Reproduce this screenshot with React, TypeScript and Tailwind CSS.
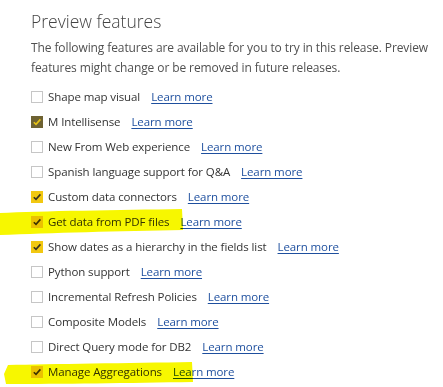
import React from 'react';

type Feature = { label: string; state: 'off' | 'on' | 'focus' };

const features: Feature[] = [
  { label: 'Shape map visual', state: 'off' },
  { label: 'M Intellisense', state: 'focus' },
  { label: 'New From Web experience', state: 'off' },
  { label: 'Spanish language support for Q&A', state: 'off' },
  { label: 'Custom data connectors', state: 'on' },
  { label: 'Get data from PDF files', state: 'on' },
  { label: 'Show dates as a hierarchy in the fields list', state: 'on' },
  { label: 'Python support', state: 'off' },
  { label: 'Incremental Refresh Policies', state: 'off' },
  { label: 'Composite Models', state: 'off' },
  { label: 'Direct Query mode for DB2', state: 'off' },
  { label: 'Manage Aggregations', state: 'on' },
];

function Check({ state }: { state: Feature['state'] }) {
  if (state === 'off') {
    return <span className="block w-[12px] h-[12px] border border-[#c6c6c6] bg-white shrink-0" />;
  }
  const focus = state === 'focus';
  return (
    <span
      className={`flex items-center justify-center w-[12px] h-[12px] shrink-0 ${
        focus ? 'bg-[#6e6232]' : 'bg-[#f2c811]'
      }`}
    >
      <svg width="10" height="10" viewBox="0 0 10 10">
        <path
          d="M1.8 5.2 L4 7.4 L8.4 2.4"
          fill="none"
          stroke={focus ? '#e8c414' : '#3a3320'}
          strokeWidth="1.6"
        />
      </svg>
    </span>
  );
}

export default function App() {
  return (
    <div
      className="relative w-[443px] h-[387px] bg-white overflow-hidden pl-[31px] pt-[9px]"
      style={{ fontFamily: '"Open Sans", "Noto Sans", sans-serif' }}
    >
      <h1 className="text-[17.5px] leading-[24px] text-[#444] font-light">Preview features</h1>
      <p className="mt-[5px] text-[12px] leading-[20px] text-[#505050] tracking-[-0.1px] w-[400px]">
        The following features are available for you to try in this release. Preview features might
        change or be removed in future releases.
      </p>

      <ul className="mt-[6px] flex flex-col">
        {features.map((f) => (
          <li
            key={f.label}
            className="flex items-center h-[25px] text-[11.5px] tracking-[-0.1px] text-[#333]"
          >
            <Check state={f.state} />
            <span className="ml-[5px]">{f.label}</span>
            <a href="#" className="ml-[11px] text-[#1e4f9e] underline underline-offset-2">
              Learn more
            </a>
          </li>
        ))}
      </ul>

      {/* highlighter marks drawn over the screenshot */}
      <svg
        className="absolute left-0 top-0 pointer-events-none mix-blend-multiply"
        width="443"
        height="387"
        viewBox="0 0 443 387"
      >
        <path
          d="M0 213 C40 211 120 210 182 209 L183 230 C120 231 50 233 0 235 Z"
          fill="#f7f700"
        />
        <path
          d="M8 365 C50 364 130 363 192 362 L193 382 C130 383 60 384 6 384 L4 374 Z"
          fill="#f7f700"
        />
      </svg>
    </div>
  );
}
